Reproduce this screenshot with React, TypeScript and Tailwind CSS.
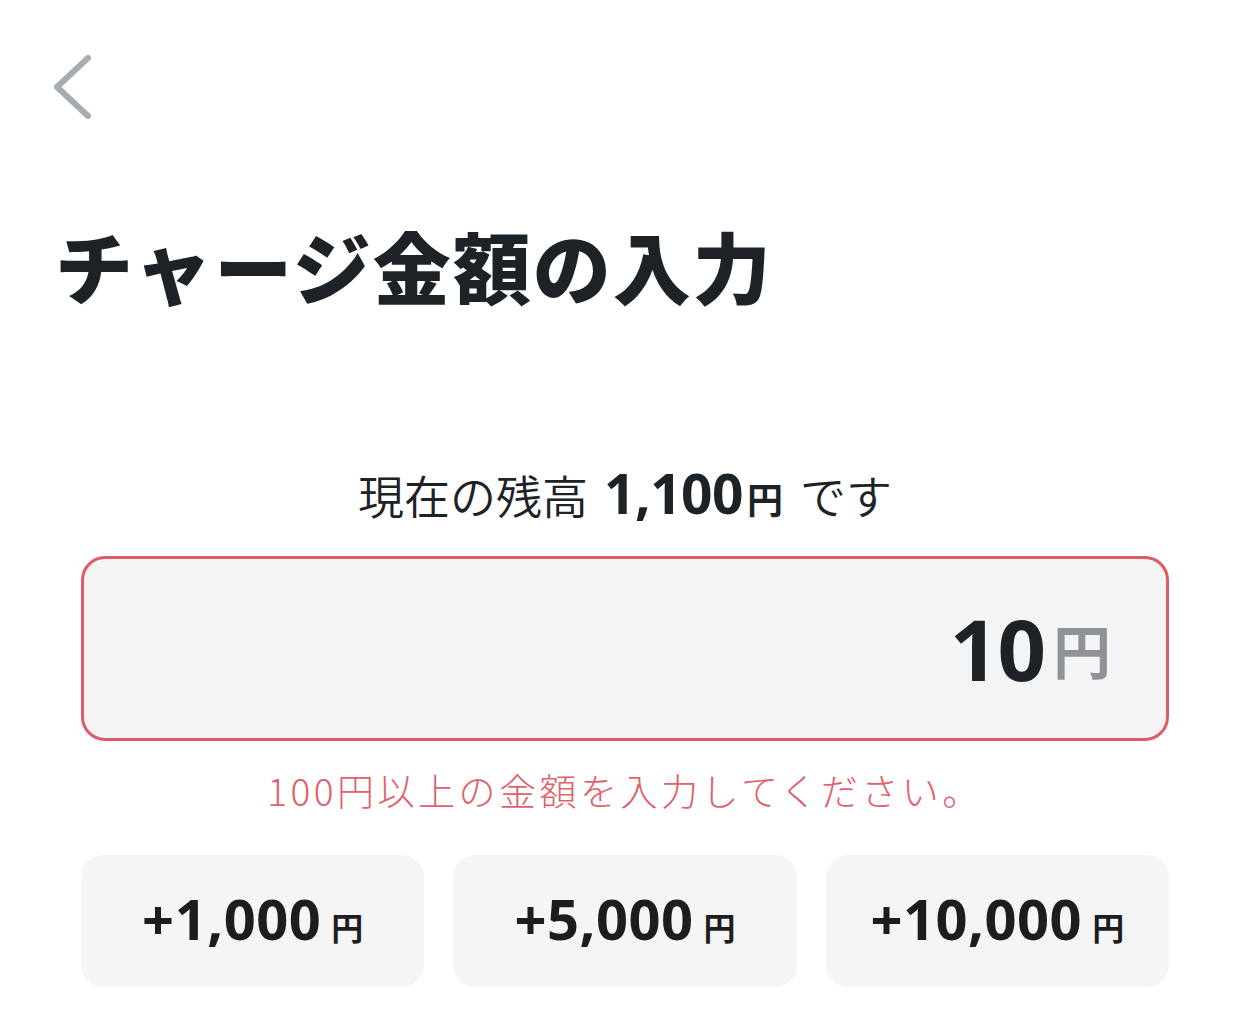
import React, { useState } from 'react';

const jp = { fontFamily: '"Noto Sans CJK JP", "Noto Sans", sans-serif' };
const num = { fontFamily: '"Open Sans", "Noto Sans CJK JP", sans-serif' };

const presets = [1000, 5000, 10000];

const App = () => {
  const [amount, setAmount] = useState(10);

  return (
    <div className="w-[1250px] h-[1028px] bg-white text-[#1d2226] overflow-hidden" style={jp}>
      <div className="pt-[54px] pl-[50px]">
        <button className="block w-[44px] h-[66px]" aria-label="戻る">
          <svg width="44" height="66" viewBox="0 0 44 66" fill="none">
            <path d="M38 4 L7 33 L38 62" stroke="#a7abb2" strokeWidth="6" strokeLinecap="round" strokeLinejoin="round" />
          </svg>
        </button>
      </div>

      <h1 className="mt-[100px] pl-[55px] text-[78px] leading-[90px] font-black tracking-[2px]">
        チャージ金額の入力
      </h1>

      <div className="mt-[142px] flex justify-center items-baseline h-[64px]">
        <span className="text-[46px] font-[350]">現在の残高</span>
        <span className="ml-[16px] text-[55px] font-bold tracking-[-0.5px]" style={num}>1,100</span>
        <span className="ml-[4px] text-[36px] font-bold">円</span>
        <span className="ml-[17px] text-[46px] font-[350]">です</span>
      </div>

      <div className="mt-[40px] mx-[81px] h-[185px] rounded-[24px] border-[3px] border-[#de5c68] bg-[#f4f4f4] flex items-center justify-end pr-[55px]">
        <span className="text-[85px] font-bold leading-none tracking-[-1px]" style={num}>{amount}</span>
        <span className="ml-[8px] text-[58px] font-bold leading-none text-[#8f9297]">円</span>
      </div>

      <p className="mt-[27px] text-center text-[37px] leading-[44px] font-light text-[#e0616c] tracking-[3.5px]">
        100円以上の金額を入力してください。
      </p>

      <div className="mt-[43px] mx-[81px] grid grid-cols-3 gap-[29px]">
        {presets.map((p) => (
          <button
            key={p}
            onClick={() => setAmount(amount + p)}
            className="h-[132px] rounded-[22px] bg-[#f5f5f5] flex items-baseline justify-center pt-[28px] text-[#1d1d1f]"
          >
            <span className="text-[56px] font-bold leading-[70px] tracking-[0.5px]" style={num}>+{p.toLocaleString()}</span>
            <span className="ml-[10px] text-[32px] font-bold">円</span>
          </button>
        ))}
      </div>
    </div>
  );
};

export default App;
